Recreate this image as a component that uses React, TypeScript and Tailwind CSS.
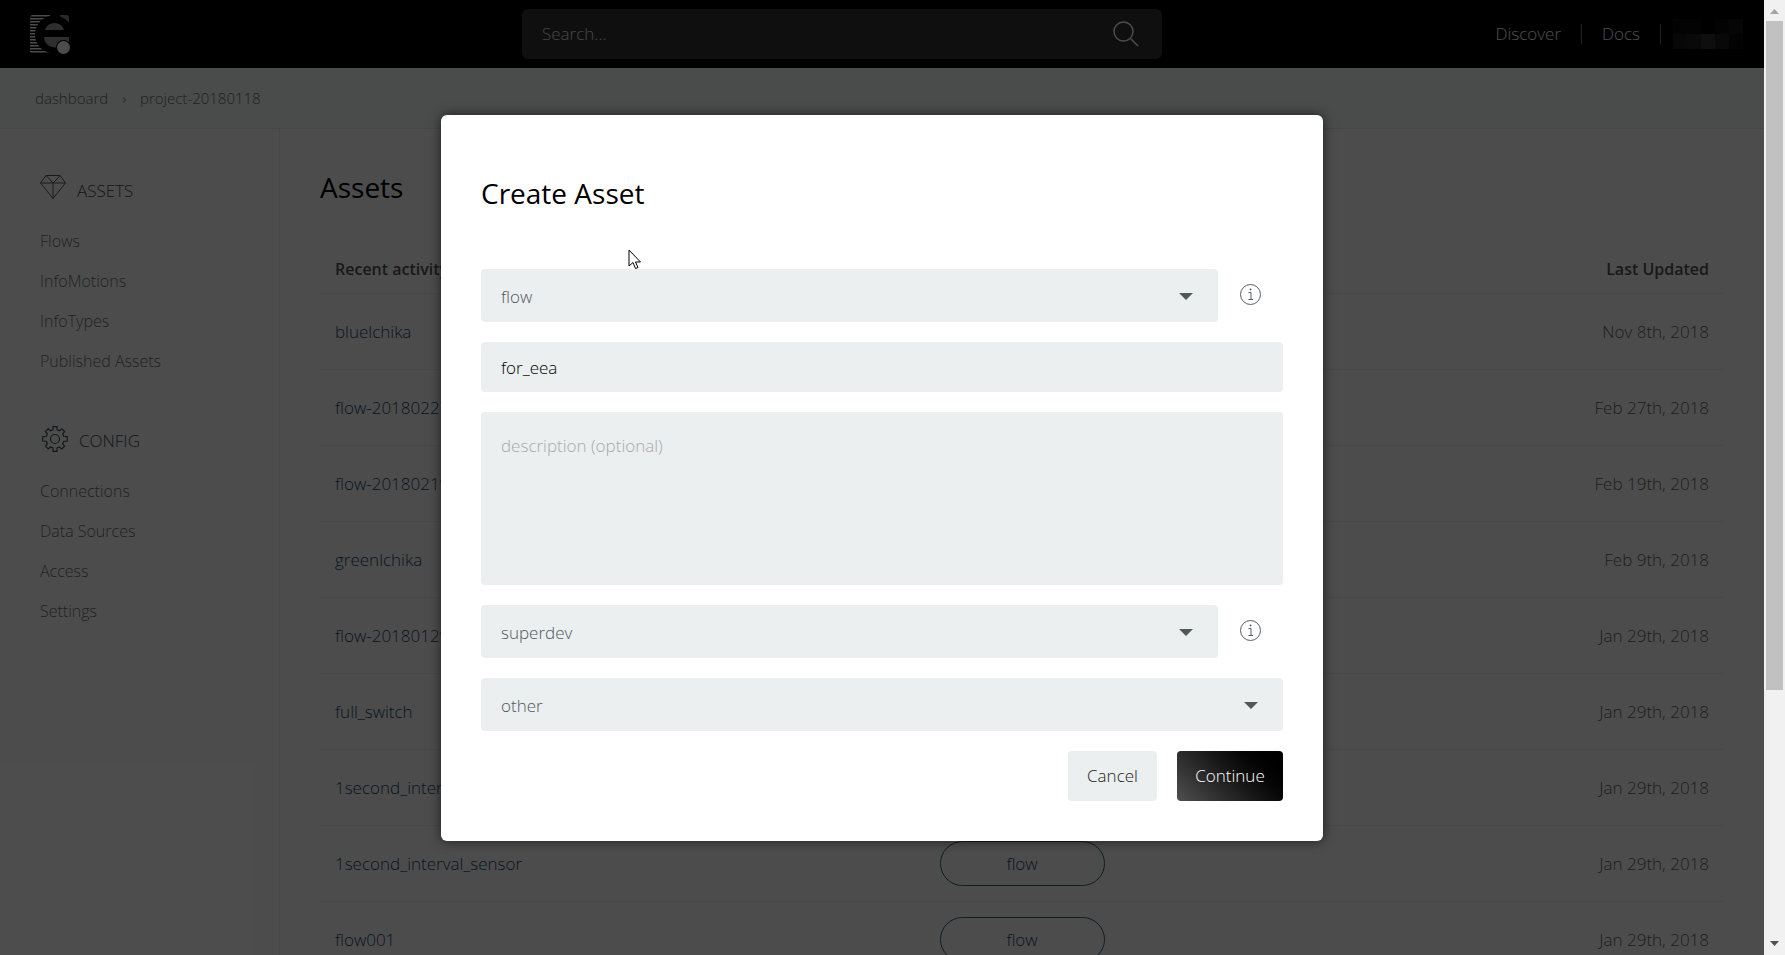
import { useState } from "react";

const assets = [
  { name: "bluelchika", updated: "Nov 8th, 2018" },
  { name: "flow-20180227", updated: "Feb 27th, 2018" },
  { name: "flow-20180219", updated: "Feb 19th, 2018" },
  { name: "greenlchika", updated: "Feb 9th, 2018" },
  { name: "flow-20180129", updated: "Jan 29th, 2018" },
  { name: "full_switch", updated: "Jan 29th, 2018" },
  { name: "1second_interval", updated: "Jan 29th, 2018" },
  { name: "1second_interval_sensor", updated: "Jan 29th, 2018" },
  { name: "flow001", updated: "Jan 29th, 2018" },
];

// shades of the blurred account name in the header
const accountTiles = [
  "bg-[#0a0a0a]", "bg-[#0a0a0a]", "bg-black", "bg-[#0c0c0c]", "bg-[#161616]",
  "bg-[#1a1a1a]", "bg-[#202020]", "bg-[#303030]", "bg-[#1c1c1c]", "bg-[#0a0a0a]",
];

function Logo() {
  return (
    <svg width="40" height="39" viewBox="0 0 40 39" aria-hidden="true">
      <defs>
        <clipPath id="logoBox">
          <rect width="39" height="39" rx="3" />
        </clipPath>
      </defs>
      <g clipPath="url(#logoBox)">
        {[0, 3, 6, 9, 12, 15, 18, 21, 24, 27, 30, 33, 36].map((y) => (
          <rect key={y} y={y} width="20" height="1.5" fill="#fff" />
        ))}
        <rect x="30" width="9" height="8" fill="#888" />
        <circle cx="24" cy="19.5" r="19" fill="#000" />
      </g>
      <path d="M15 15a10 10 0 0 1 19 0z" fill="#999" />
      <path d="M14 22h25v6H33a10.500 10.500 0 0 1-19-6z" fill="#999" />
      <circle cx="33.500" cy="32.500" r="7.500" fill="#000" />
      <circle cx="33.500" cy="32.500" r="6.500" fill="#fff" />
    </svg>
  );
}

function SearchIcon() {
  return (
    <svg width="26" height="26" viewBox="0 0 26 26" fill="none" stroke="#fff" strokeWidth="1.5">
      <circle cx="10.5" cy="10.5" r="9.5" />
      <path d="M17.5 17.5L25 25" />
    </svg>
  );
}

function DiamondIcon() {
  return (
    <svg width="26" height="24" viewBox="0 0 26 24" className="mb-1" fill="none" stroke="#555f66" strokeWidth="1">
      <path d="M6 .5h14l5.500 7.500L13 23.500.5 8zM.5 8h25M6 .5L9.500 4 13 8l4-4 3-3.500M13 8v15.500" />
    </svg>
  );
}

function GearIcon() {
  return (
    <svg width="28" height="26" viewBox="-2 0 28 26" fill="none" stroke="#444d54" strokeWidth="1.200">
      <path d="M11 .7h4v3l2.500 1 2.200-2 2.900 2.800-2 2.300 1 2.500 3.700.4v4.300l-3.500.3-1.200 2.600 2 2.200-2.900 2.800-2.200-1.900-2.500 1v3.300h-4V22l-2.600-1-2.200 1.900-2.800-2.800 2-2.200-1.200-2.600-3.500-.3v-4.300l3.600-.4 1.100-2.500-2-2.300 2.800-2.800 2.200 2 2.600-1z" />
      <circle cx="13" cy="13" r="4.500" />
    </svg>
  );
}

function InfoButton() {
  return (
    <button type="button" aria-label="More information" className="mx-[22px] mb-0.5 shrink-0">
      <svg width="21" height="21" viewBox="0 0 21 21" fill="none" stroke="#555c60">
        <circle cx="10.5" cy="10.5" r="10" />
        <path d="M8.500 8.500h2.500v7M8.500 15.500h4.500" />
        <circle cx="10.500" cy="5.500" r="1" fill="#555c60" stroke="none" />
      </svg>
    </button>
  );
}

function SelectField({ label, options }: { label: string; options: string[] }) {
  return (
    <div className="relative min-w-0 flex-1">
      <select
        aria-label={label}
        className="block h-[53px] w-full appearance-none rounded bg-[#ebefef] px-5 pt-0.5 text-[#50575a]"
      >
        {options.map((option) => (
          <option key={option}>{option}</option>
        ))}
      </select>
      <svg width="14" height="7" viewBox="0 0 14 7" className="pointer-events-none absolute top-6 right-[25px]">
        <path d="M0 0h14L7 7z" fill="#50575a" />
      </svg>
    </div>
  );
}

function NavGroup({ title, icon, items }: { title: string; icon: React.ReactNode; items: string[] }) {
  return (
    <section>
      <h2 className="flex h-10 items-center gap-[11px] text-[17px] text-[#444d54]">
        {icon}
        <span className="pt-1">{title}</span>
      </h2>
      <ul className="pt-3 text-base">
        {items.map((item) => (
          <li key={item} className="h-10 leading-10">
            <a href="#" className="text-[#6f7377]">{item}</a>
          </li>
        ))}
      </ul>
    </section>
  );
}

export default function App() {
  const [name, setName] = useState("for_eea");
  const [description, setDescription] = useState("");

  return (
    <div className="relative flex h-screen overflow-hidden bg-white font-['Open_Sans',sans-serif] text-[17px] font-light">
      <div className="relative min-w-0 flex-1 overflow-hidden">
        <header className="grid h-[68px] grid-cols-[492px_640px_1fr] items-center bg-black pr-[21px] pl-[30px] text-white">
          <a href="#" aria-label="Home" className="w-10">
            <Logo />
          </a>
          <form className="flex h-[50px] items-center rounded-md bg-[#333] pr-[23px] pl-5">
            <input
              type="search"
              aria-label="Search"
              placeholder="Search..."
              className="min-w-0 flex-1 outline-none placeholder:text-[#e5e5e5]"
            />
            <button type="button" aria-label="Search">
              <SearchIcon />
            </button>
          </form>
          <nav className="flex items-center justify-end text-white">
            <a href="#">Discover</a>
            <span className="mx-5 h-5 w-px bg-[#777]" />
            <a href="#">Docs</a>
            <span className="mr-3 ml-5 h-5 w-px bg-[#777]" />
            <div className="grid w-[70px] grid-cols-5">
              {accountTiles.map((tile, i) => (
                <span key={i} className={`h-[15px] ${tile}`} />
              ))}
            </div>
          </nav>
        </header>

        <nav className="flex h-[61px] items-center gap-[14px] border-b border-[#eee] bg-[#f8fcfa] pl-[35px] text-[15px] text-[#666f75]">
          <a href="#">dashboard</a>
          <span>›</span>
          <a href="#">project-20180118</a>
        </nav>

        <div className="flex">
          <aside className="w-[280px] shrink-0 border-r border-[#f0f0f0] pt-10 pl-10">
            <NavGroup title="ASSETS" icon={<DiamondIcon />} items={["Flows", "InfoMotions", "InfoTypes", "Published Assets"]} />
            <div className="h-[38px]" />
            <NavGroup title="CONFIG" icon={<GearIcon />} items={["Connections", "Data Sources", "Access", "Settings"]} />
          </aside>
          <main className="min-w-0 flex-1 px-10 pt-[35px] pb-10">
            <h1 className="text-[28px] leading-[46px] font-normal text-black">Assets</h1>
            <table className="mt-6 w-full table-fixed">
              <thead>
                <tr className="h-[59px] border-b border-[#f0f0f0] text-base text-[#50555a]">
                  <th className="px-[15px] pt-3 text-left font-semibold">Recent activity</th>
                  <th className="pt-3 font-semibold">Type</th>
                  <th className="px-[15px] pt-3 text-right font-semibold">Last Updated</th>
                </tr>
              </thead>
              <tbody>
                {assets.map((asset) => (
                  <tr key={asset.name} className="h-[76px] border-b border-[#f0f0f0]">
                    <td className="px-[15px] pt-0.5">
                      <a href="#" className="text-[#124a6e]">{asset.name}</a>
                    </td>
                    <td className="text-center">
                      <span className="inline-block h-[45px] w-[165px] rounded-full border border-[#2f6080] align-middle leading-[43px] text-[#124a6e]">
                        flow
                      </span>
                    </td>
                    <td className="px-[15px] pt-0.5 text-right text-[#60676b]">{asset.updated}</td>
                  </tr>
                ))}
              </tbody>
            </table>
          </main>
        </div>

        <div className="absolute inset-0 flex items-start justify-center bg-black/70 pt-[115px]">
          <form role="dialog" aria-label="Create Asset" className="flex w-1/2 flex-col gap-5 rounded-md bg-white p-10 shadow-[0_0_12px_rgba(0,0,0,0.6)]">
            <h2 className="pt-[17px] pb-[35px] text-[28px] leading-[42px] font-normal text-black">Create Asset</h2>
            <div className="flex items-center">
              <SelectField label="Asset type" options={["flow", "infomotion", "infotype"]} />
              <InfoButton />
            </div>
            <input
              aria-label="Name"
              value={name}
              onChange={(e) => setName(e.target.value)}
              className="h-[50px] rounded bg-[#ebefef] px-5 text-black outline-none"
            />
            <textarea
              aria-label="Description"
              placeholder="description (optional)"
              value={description}
              onChange={(e) => setDescription(e.target.value)}
              className="h-[173px] resize-none rounded bg-[#ebefef] px-5 py-[21px] outline-none placeholder:text-[#a9a9a9]"
            />
            <div className="flex items-center">
              <SelectField label="Access group" options={["superdev"]} />
              <InfoButton />
            </div>
            <div className="flex">
              <SelectField label="Category" options={["other"]} />
            </div>
            <div className="flex justify-end gap-5">
              <button type="button" className="h-[50px] w-[89px] rounded bg-[#ebefef] text-[#222]">
                Cancel
              </button>
              <button type="submit" className="h-[50px] w-[106px] rounded bg-linear-45 from-[#505050] to-black text-white">
                Continue
              </button>
            </div>
          </form>
          <svg width="14" height="21" viewBox="0 0 14 21" className="absolute top-[249px] left-[628px]">
            <path d="M1 1v16l4-3.500 2.500 6 2.500-1-2.500-5.500h5z" fill="#fff" stroke="#000" />
          </svg>
        </div>
      </div>

      <div className="flex w-[21px] shrink-0 flex-col items-center bg-[#f1f1f1]">
        <svg width="21" height="21" viewBox="0 0 21 21">
          <path d="M6 14h9l-4.500-5z" fill="#a3a3a3" />
        </svg>
        <div className="h-[70%] w-[17px] bg-[#c1c1c1]" />
        <svg width="21" height="21" viewBox="0 0 21 21" className="mt-auto">
          <path d="M6 7h9l-4.500 5z" fill="#505050" />
        </svg>
      </div>
    </div>
  );
}
